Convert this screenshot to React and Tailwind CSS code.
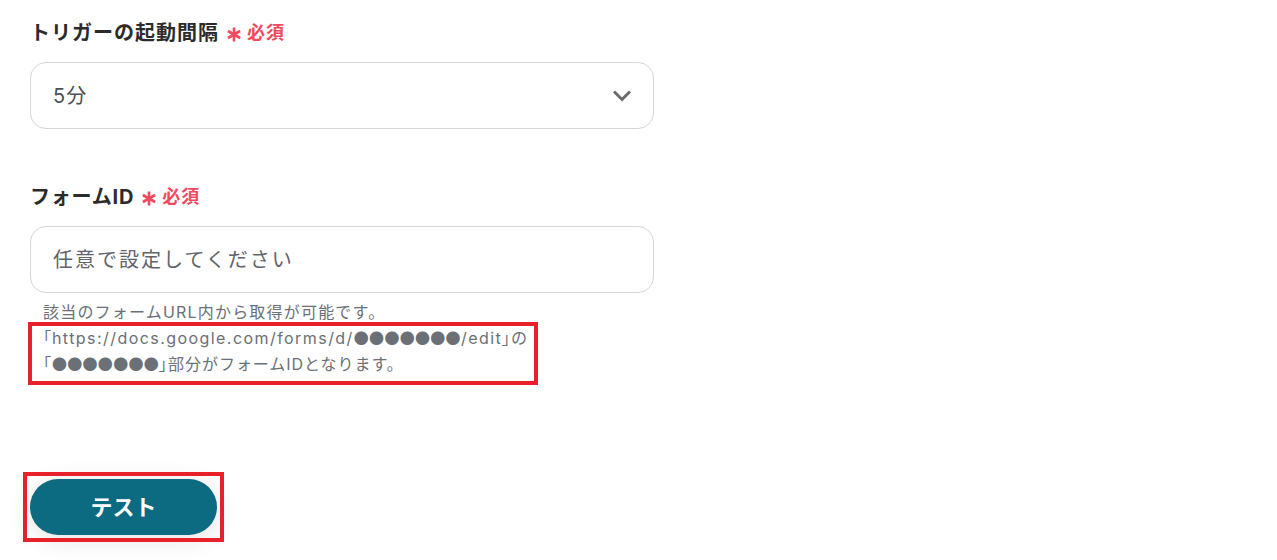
import React from "react";

const font = { fontFamily: 'Inter, "Noto Sans CJK JP", "Noto Sans", sans-serif' };

function Asterisk() {
  return (
    <svg width="14" height="15" viewBox="0 0 14 15" className="mt-[3px]">
      <g stroke="#f2495e" strokeWidth="2.6" strokeLinecap="butt">
        <line x1="7" y1="0.5" x2="7" y2="14.5" />
        <line x1="0.9" y1="4" x2="13.1" y2="11" />
        <line x1="0.9" y1="11" x2="13.1" y2="4" />
      </g>
    </svg>
  );
}

function Required() {
  return (
    <span className="ml-[8px] flex items-center text-[#f2495e]">
      <Asterisk />
      <span className="ml-[6px] text-[18px] font-bold leading-none tracking-[0.05em]">必須</span>
    </span>
  );
}

function Dots() {
  return (
    <span className="text-[15px] tracking-[0.02em] [font-family:'Noto_Sans_CJK_JP',sans-serif]">●●●●●●●</span>
  );
}

function B({ children }) {
  return <span className="[font-feature-settings:'palt'] [font-family:'Noto_Sans_CJK_JP',sans-serif]">{children}</span>;
}

export default function App() {
  return (
    <div className="min-h-screen w-full bg-white pl-[30px] pt-[20px] text-[#333]" style={font}>
      <div className="w-[624px]">
        <div className="flex h-[26px] items-center text-[20px] font-bold tracking-[0.05em] text-[#2b2b2b]">
          トリガーの起動間隔
          <Required />
        </div>
        <div className="mt-[16px] flex h-[67px] items-center justify-between rounded-[16px] border border-[#d3d6db] bg-white pl-[22px] pr-[22px]">
          <span className="text-[20px] tracking-[0.06em] text-[#4b4f57]">5分</span>
          <svg width="18" height="12" viewBox="0 0 18 12" fill="none">
            <path d="M2 2.5 L9 9.5 L16 2.5" stroke="#6b6b6b" strokeWidth="3" strokeLinecap="square" />
          </svg>
        </div>

        <div className="mt-[55px] flex h-[26px] items-center text-[20px] font-bold tracking-[0.04em] text-[#2b2b2b]">
          フォームID
          <Required />
        </div>
        <div className="mt-[16px] flex h-[67px] items-center rounded-[16px] border border-[#d3d6db] bg-white pl-[22px]">
          <span className="text-[20px] tracking-[0.1em] text-[#5f636b]">任意で設定してください</span>
        </div>

        <div className="mt-[7px] pl-[13px] text-[16px] leading-[25px] tracking-[0.06em] text-[#6b6f76]">
          <div className="tracking-[0.075em]">該当のフォームURL内から取得が可能です。</div>
          <div className="relative">
            <div>
              <B>「</B>
              <span className="tracking-[0.09em]">https://docs.google.com/forms/d/</span>
              <Dots />
              <span className="tracking-[0.09em]">/edit</span>
              <B>」</B>の
            </div>
            <div>
              <B>「</B><Dots /><B>」</B>部分がフォームIDとなります。
            </div>
            <div className="pointer-events-none absolute left-[-15px] top-[-3px] h-[63px] w-[510px] border-[4px] border-[#e8202a]" />
          </div>
        </div>

        <div className="relative mt-[102px] w-fit">
          <button className="flex h-[56px] w-[187px] items-center justify-center rounded-full bg-[#0c6a81] text-[22px] font-bold text-white shadow-[0_4px_24px_rgba(0,0,0,0.12)]">
            テスト
          </button>
          <div className="pointer-events-none absolute -left-[7px] -top-[7px] h-[70px] w-[201px] border-[4px] border-[#e8202a]" />
        </div>
      </div>
    </div>
  );
}
